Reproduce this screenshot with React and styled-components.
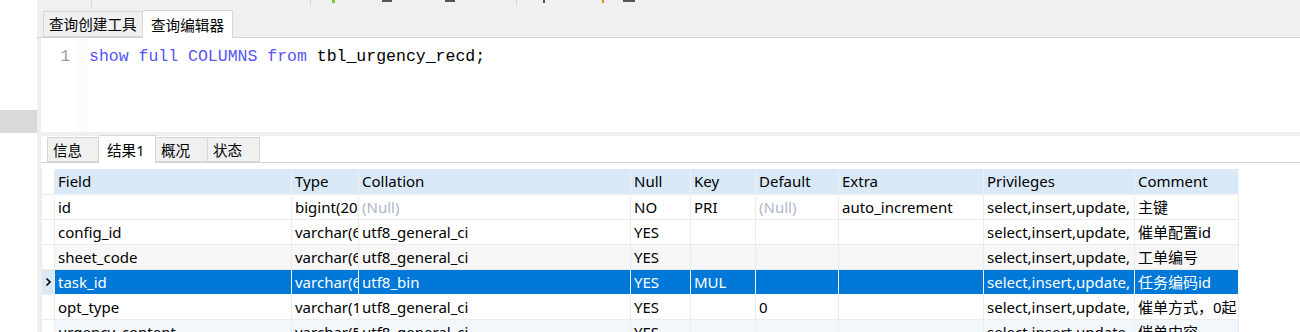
import React from "react";
import styled, { createGlobalStyle } from "styled-components";

const Global = createGlobalStyle`
  html, body { margin: 0; padding: 0; background: #ffffff; }
  body { font-family: "Noto Sans", "Noto Sans CJK SC", sans-serif; }
  * { box-sizing: border-box; }
`;

const Shell = styled.div`
  display: flex;
  width: 1300px;
  height: 332px;
  overflow: hidden;
  font-family: "Noto Sans", "Noto Sans CJK SC", sans-serif;
  font-size: 15px;
  color: #000;
`;

const Sidebar = styled.div`
  width: 37px;
  flex: none;
  background: #ffffff;
  padding-top: 110px;
`;

const SideItem = styled.div`
  height: 23px;
  background: #d9d9d9;
`;

const Main = styled.div`
  flex: 1;
  min-width: 0;
  background: #f0f0f0;
  display: flex;
  flex-direction: column;
  overflow: hidden;
`;

const Toolbar = styled.div`
  flex: none;
  height: 11px;
  display: flex;
  align-items: flex-start;
`;

const ToolMark = styled.div`
  flex: none;
  margin-left: ${(p) => p.$gap}px;
  width: ${(p) => p.$w}px;
  height: ${(p) => p.$h}px;
  background: ${(p) => p.$c};
`;

const TabBar = styled.div`
  flex: none;
  display: flex;
  align-items: flex-end;
  height: ${(p) => p.$h}px;
  padding-left: 6px;
  background: ${(p) => p.$bg};
  border-bottom: 1px solid #d4d4d4;
`;

const Tab = styled.div`
  flex: none;
  width: ${(p) => p.$w}px;
  height: ${(p) => (p.$active ? p.$h + 2 : p.$h)}px;
  margin-bottom: ${(p) => (p.$active ? -1 : 0)}px;
  display: flex;
  align-items: center;
  padding-left: ${(p) => (p.$active ? 8 : 5)}px;
  font-size: 14.6px;
  white-space: nowrap;
  background: ${(p) => (p.$active ? "#ffffff" : "#f0f0f0")};
  border: 1px solid #d6d6d6;
  border-bottom: ${(p) => (p.$active ? "none" : "1px solid #d6d6d6")};
  border-left: ${(p) => (p.$first ? "1px solid #d6d6d6" : "none")};
  color: #000;
  padding-bottom: 1px;
`;

const Editor = styled.div`
  flex: none;
  margin-left: 4px;
  height: 94px;
  background: #ffffff;
  display: flex;
`;

const Gutter = styled.div`
  width: 46px;
  flex: none;
  display: flex;
  background: #ffffff;
`;

const LineNo = styled.div`
  width: 35px;
  padding-top: 8px;
  text-align: right;
  padding-right: 6px;
  font-family: "Liberation Mono", "DejaVu Sans Mono", monospace;
  font-size: 16px;
  line-height: 22px;
  color: #9a9a9a;
`;

const GutterEdge = styled.div`
  width: 11px;
  background-color: #fcfcfc;
  background-image: radial-gradient(#ededed 0.6px, transparent 0.7px);
  background-size: 2px 2px;
`;

const Code = styled.div`
  padding: 8px 0 0 2px;
  font-family: "Liberation Mono", "Courier New", monospace;
  font-size: 16.5px;
  line-height: 22px;
  white-space: pre;
  color: #000;
`;

const Kw = styled.span`
  color: #5656f5;
`;

const Band = styled.div`
  flex: none;
  height: 4px;
  margin-left: 4px;
  background: #efefef;
`;

const Lower = styled.div`
  margin-left: 4px;
  flex: 1;
  min-height: 0;
  display: flex;
  flex-direction: column;
  background: #ffffff;
`;

const ResultArea = styled.div`
  flex: 1;
  min-height: 0;
  padding-top: 6px;
  background: #ffffff;
`;

const Grid = styled.table`
  border-collapse: collapse;
  table-layout: fixed;
  width: 1197px;
  font-size: 15px;
`;

const HeadCell = styled.th`
  height: 25px;
  padding: 0 3px;
  text-align: left;
  font-weight: normal;
  white-space: nowrap;
  overflow: hidden;
  background: ${(p) => (p.$blank ? "#ffffff" : "#d9e9f7")};
  border: 1px solid ${(p) => (p.$blank ? "#e9e9e9" : "#edf3f9")};
  border-top: none;
  color: #000;
`;

const Row = styled.tr`
  background: ${(p) => p.$bg};
  color: ${(p) => (p.$sel ? "#ffffff" : "#000000")};
`;

const Cell = styled.td`
  height: 25px;
  padding: 0 3px;
  white-space: nowrap;
  overflow: hidden;
  border: 1px solid ${(p) => (p.$sel ? "#ffffff" : "#ececec")};
  color: ${(p) => (p.$null ? "#aeb7c8" : "inherit")};
`;

const Marker = styled.td`
  height: 25px;
  padding: 0;
  border: 1px solid #ececec;
  background: ${(p) => (p.$sel ? "#d9e9f7" : "#ffffff")};
  text-align: center;
  vertical-align: middle;
`;

const cols = [13, 237, 67, 272, 60, 65, 83, 145, 151, 104];
const heads = ["Field", "Type", "Collation", "Null", "Key", "Default", "Extra", "Privileges", "Comment"];

const NULL = { n: true };
const PRIV = "select,insert,update,";
const rows = [
  { bg: "#ffffff", cells: ["id", "bigint(20", NULL, "NO", "PRI", NULL, "auto_increment", PRIV, "主键"] },
  { bg: "#ffffff", cells: ["config_id", "varchar(6", "utf8_general_ci", "YES", "", "", "", PRIV, "催单配置id"] },
  { bg: "#f7f7f7", cells: ["sheet_code", "varchar(6", "utf8_general_ci", "YES", "", "", "", PRIV, "工单编号"] },
  { bg: "#0078d7", sel: true, cells: ["task_id", "varchar(6", "utf8_bin", "YES", "MUL", "", "", PRIV, "任务编码id"] },
  { bg: "#ffffff", cells: ["opt_type", "varchar(1", "utf8_general_ci", "YES", "", "0", "", PRIV, "催单方式，0起"] },
  { bg: "#f2f7fc", cells: ["urgency_content", "varchar(5", "utf8_general_ci", "YES", "", "", "", PRIV, "催单内容"] },
];

const Chevron = () => (
  <svg width="7" height="10" viewBox="0 0 7 10" style={{ display: "block", margin: "0 auto" }}>
    <path d="M1.5 1.5 L5 5 L1.5 8.5" fill="none" stroke="#000" strokeWidth="1.6" />
  </svg>
);

export default function App() {
  return (
    <>
      <Global />
      <Shell>
        <Sidebar>
          <SideItem />
        </Sidebar>
        <Main>
          <Toolbar>
            <ToolMark $gap={54} $w={1} $h={7} $c="#d6d6d6" />
            <ToolMark $gap={218} $w={1} $h={6} $c="#d6d6d6" />
            <ToolMark $gap={21} $w={3} $h={3} $c="#7ac943" />
            <ToolMark $gap={47} $w={10} $h={2} $c="#555" />
            <ToolMark $gap={53} $w={10} $h={2} $c="#555" />
            <ToolMark $gap={61} $w={1} $h={6} $c="#d6d6d6" />
            <ToolMark $gap={26} $w={2} $h={3} $c="#555" />
            <ToolMark $gap={57} $w={2} $h={3} $c="#e08a1e" />
            <ToolMark $gap={19} $w={12} $h={2} $c="#555" />
          </Toolbar>
          <TabBar $h={27} $bg="#f0f0f0">
            <Tab $first $w={100} $h={26}>查询创建工具</Tab>
            <Tab $active $w={90} $h={26}>查询编辑器</Tab>
          </TabBar>
          <Editor>
            <Gutter>
              <LineNo>1</LineNo>
              <GutterEdge />
            </Gutter>
            <Code>
              <Kw>show</Kw> <Kw>full</Kw> <Kw>COLUMNS</Kw> <Kw>from</Kw> tbl_urgency_recd;
            </Code>
          </Editor>
          <Band />
          <Lower>
            <TabBar $h={27} $bg="#ffffff">
              <Tab $first $w={52} $h={25}>信息</Tab>
              <Tab $active $w={57} $h={26}>结果1</Tab>
              <Tab $w={52} $h={25}>概况</Tab>
              <Tab $w={52} $h={25}>状态</Tab>
            </TabBar>
            <ResultArea>
              <Grid>
                <colgroup>
                  {cols.map((w, i) => (
                    <col key={i} style={{ width: w }} />
                  ))}
                </colgroup>
                <thead>
                  <tr>
                    <HeadCell $blank />
                    {heads.map((h) => (
                      <HeadCell key={h}>{h}</HeadCell>
                    ))}
                  </tr>
                </thead>
                <tbody>
                  {rows.map((r, i) => (
                    <Row key={i} $bg={r.bg} $sel={r.sel}>
                      <Marker $sel={r.sel}>{r.sel ? <Chevron /> : null}</Marker>
                      {r.cells.map((c, j) => (
                        <Cell key={j} $sel={r.sel} $null={c === NULL}>
                          {c === NULL ? "(Null)" : c}
                        </Cell>
                      ))}
                    </Row>
                  ))}
                </tbody>
              </Grid>
            </ResultArea>
          </Lower>
        </Main>
      </Shell>
    </>
  );
}
